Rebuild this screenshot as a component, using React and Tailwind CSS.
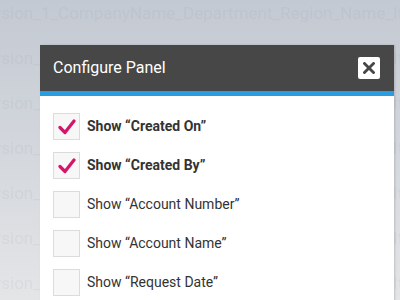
import React from "react";

const rows = [
  { label: "Show \u201cCreated On\u201d", checked: true },
  { label: "Show \u201cCreated By\u201d", checked: true },
  { label: "Show \u201cAccount Number\u201d", checked: false },
  { label: "Show \u201cAccount Name\u201d", checked: false },
  { label: "Show \u201cRequest Date\u201d", checked: false },
];

const bgLines = [
  "Version_1_CompanyName_Department_Region_Name_Item_Ibdur",
  "Version_2_CompanyName_Department_Region_Name_Item_Ibdur",
  "Version_1_CompanyName_Department_Region_Name_Item_Ibdur",
  "Version_1_CompanyName_Department_Region_Name_Item_Ibdur",
  "Version_1_CompanyName_Department_Region_Name_Item_Ibdur",
  "Version_1_CompanyName_Department_Region_Name_Item_Ibdur",
  "Version_1_CompanyName_Department_Region_Name_Item_Ibdur",
];

function Check() {
  return (
    <svg width="18" height="16" viewBox="0 0 18 16">
      <path d="M2 8.5 L7 13.5 L16 2" fill="none" stroke="#d6146a" strokeWidth="3.2" strokeLinecap="round" strokeLinejoin="round" />
    </svg>
  );
}

export default function App() {
  return (
    <div className="relative w-[400px] h-[300px] overflow-hidden bg-gradient-to-b from-[#c3c9d2] to-[#e4e5e7] font-['Roboto',sans-serif]">
      <div className="flex flex-col gap-[25px] pt-[3px] -ml-[24px] blur-[0.7px]">
        {bgLines.map((t, i) => (
          <div key={i} className="text-[17px] leading-[20px] whitespace-nowrap text-[rgba(120,130,145,0.08)]">{t}</div>
        ))}
      </div>

      <div className="absolute left-[40px] top-[45px] w-[354px] h-[260px] bg-white shadow-[1px_0_2px_rgba(0,0,0,0.15)]">
        <div className="h-[46px] bg-[#474747] flex items-center justify-between pl-[13px] pr-[14px]">
          <span className="text-white text-[16px]">Configure Panel</span>
          <div className="w-[22px] h-[22px] bg-white rounded-[2px] flex items-center justify-center">
            <svg width="12" height="12" viewBox="0 0 12 12">
              <path d="M1.5 1.5 L10.5 10.5 M10.5 1.5 L1.5 10.5" stroke="#474747" strokeWidth="2.8" strokeLinecap="square" />
            </svg>
          </div>
        </div>
        <div className="h-[5px] bg-[#2a9de0]" />
        <div className="flex flex-col gap-[12px] pt-[17px] pl-[13px]">
          {rows.map((r) => (
            <div key={r.label} className="flex items-center gap-[7px]">
              <div className="w-[27px] h-[27px] border border-[#dcdcdc] bg-[#f7f7f7] flex items-center justify-center">
                {r.checked && <Check />}
              </div>
              <span className={"text-[14px] text-[#333] " + (r.checked ? "font-bold" : "")}>{r.label}</span>
            </div>
          ))}
        </div>
      </div>
    </div>
  );
}
